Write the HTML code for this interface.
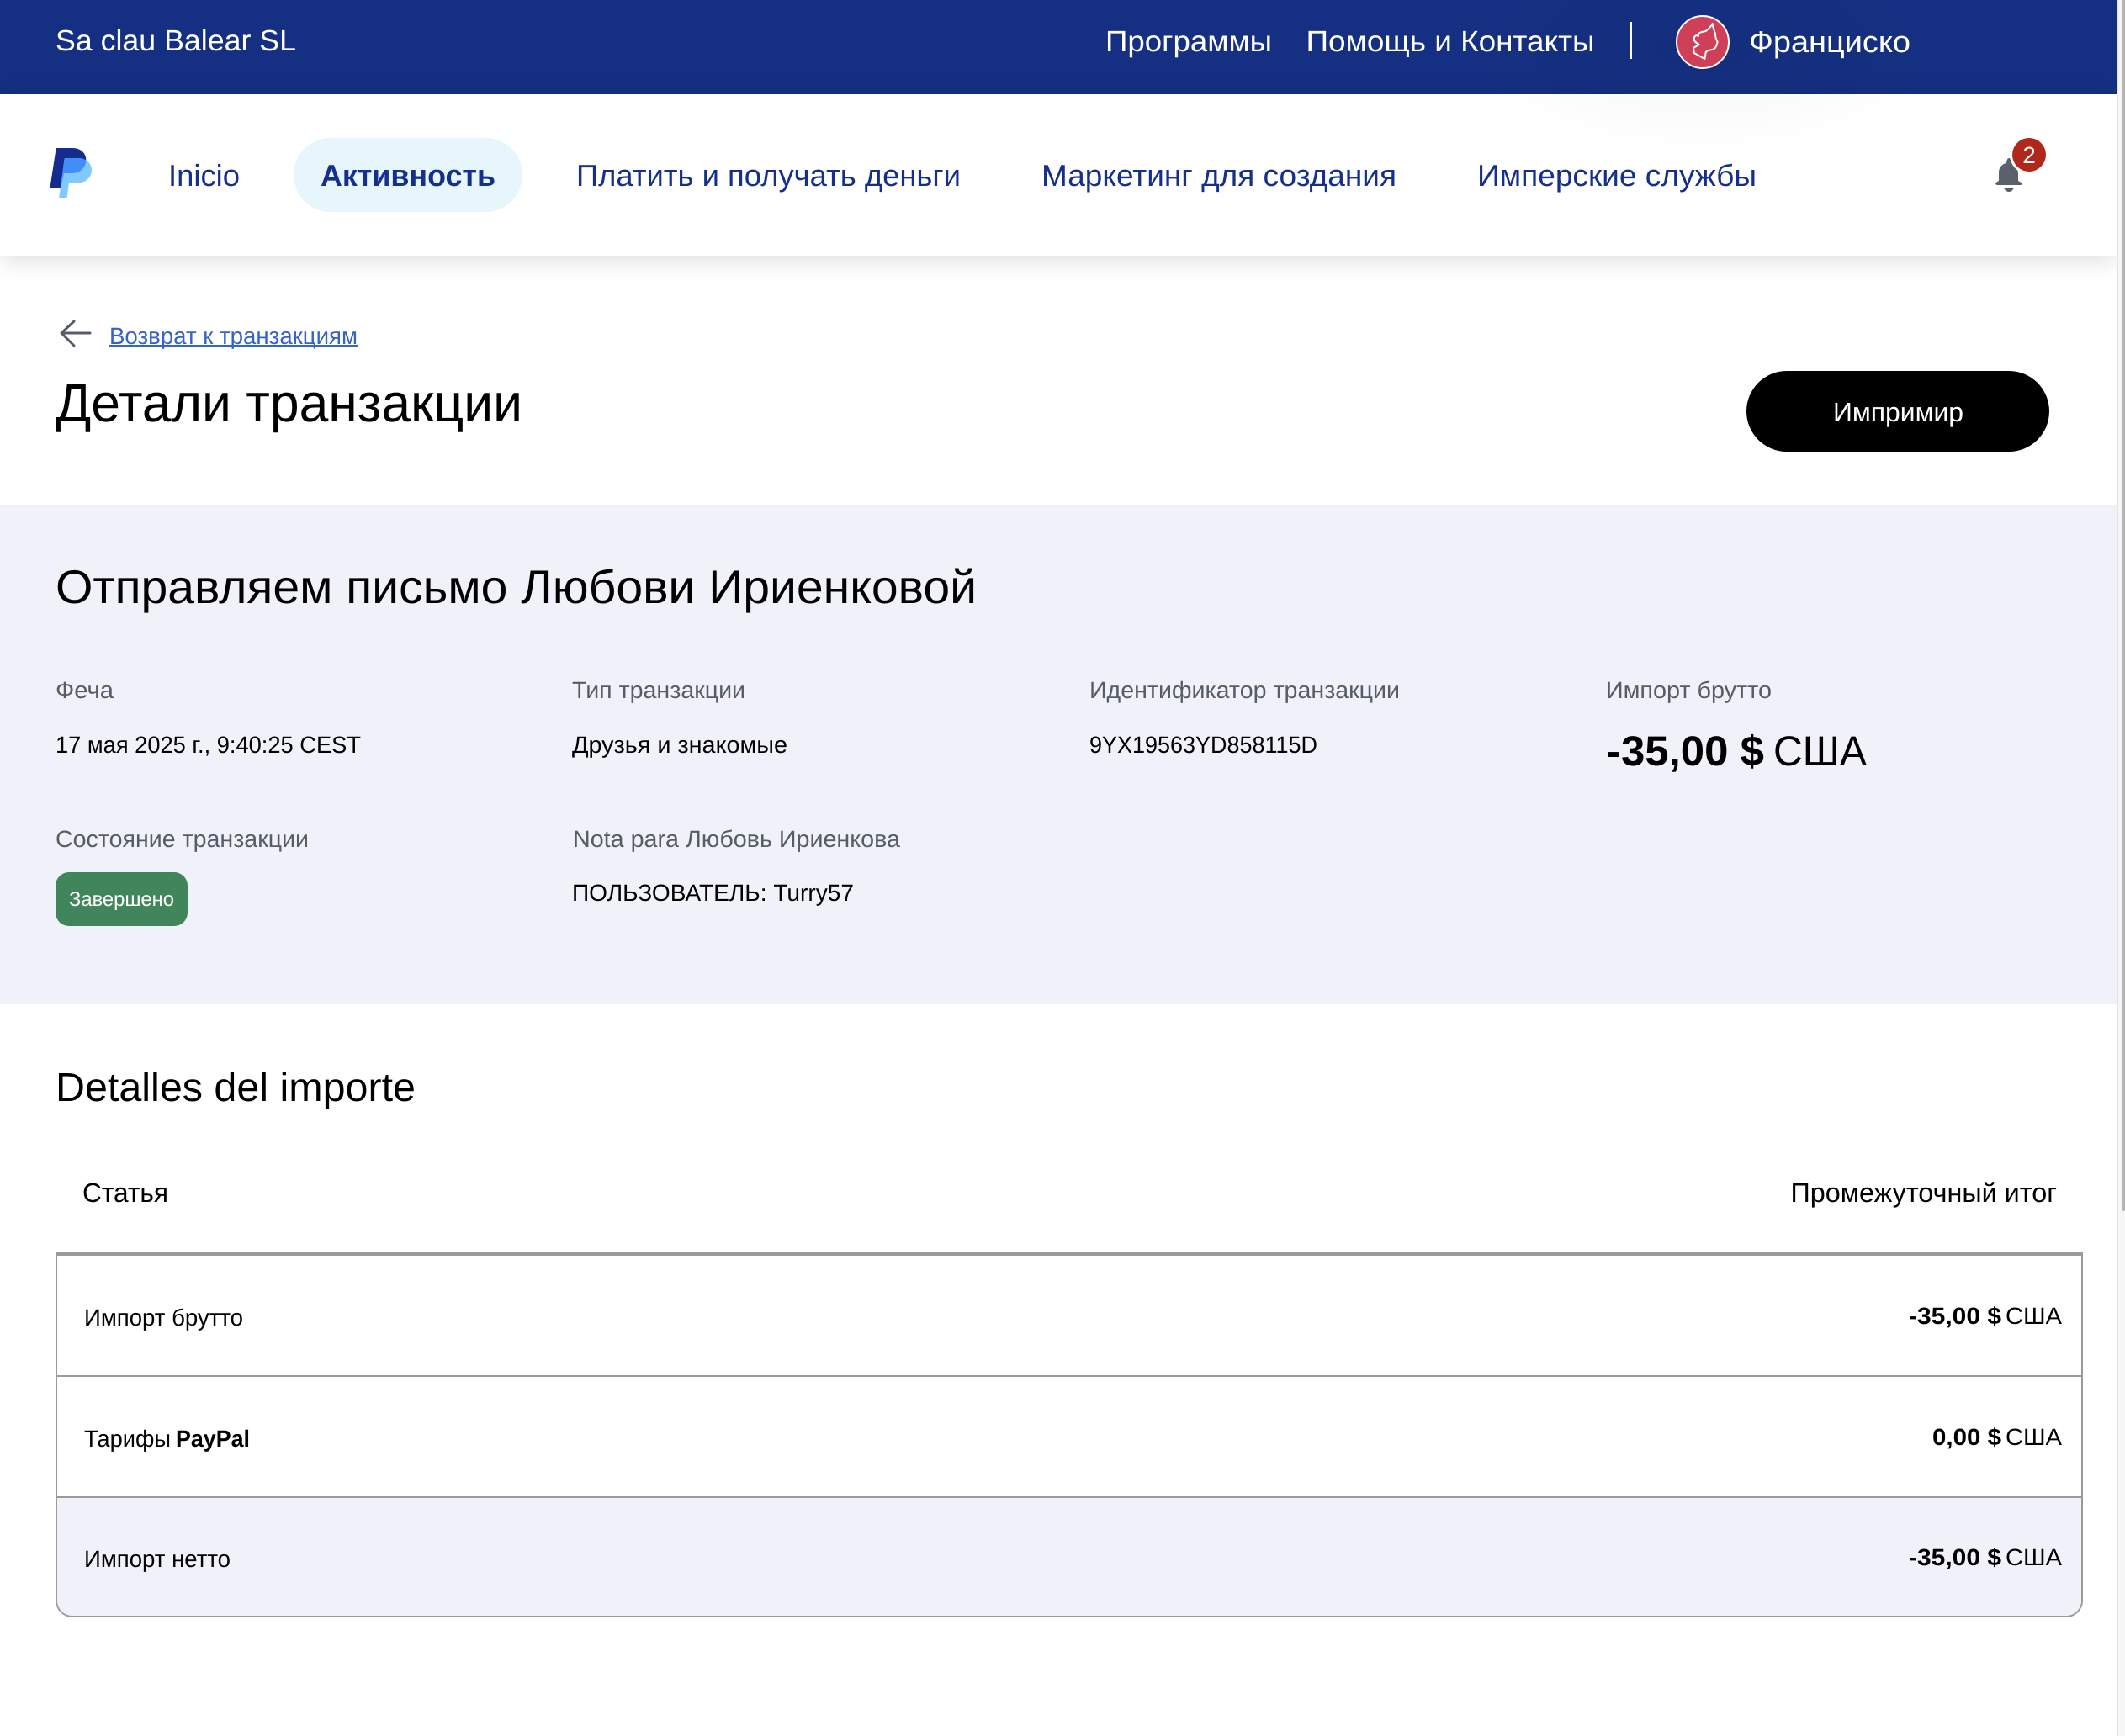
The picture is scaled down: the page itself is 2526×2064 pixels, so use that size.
<!DOCTYPE html>
<html lang="ru">
<head>
<meta charset="utf-8">
<title>Детали транзакции</title>
<style>
html,body{margin:0;padding:0;background:#fff;width:2526px;height:2064px;overflow:hidden}
body{position:relative;font-family:"Liberation Sans","Noto Sans CJK SC",sans-serif}
.b{position:absolute;display:block}
svg{position:absolute;left:0;top:0}
text{font-family:"Liberation Sans","Noto Sans CJK SC",sans-serif;text-rendering:geometricPrecision}
.nav{fill:#15308a;font-size:36px}
.top{fill:#fff;font-size:35px}
.lab{fill:#545d68;font-size:28px}
.val{fill:#000;font-size:28px}
.bold{font-weight:700}
</style>
</head>
<body>
<main>
  <div class="b" style="left:0;top:601px;width:2517px;height:593px;background:#f0f1f9"></div>
  <div class="b" style="left:0;top:0;width:2517px;height:112px;background:#153082"></div>
  <div class="b" style="left:0;top:112px;width:2517px;height:192px;background:#fff;box-shadow:0 6px 26px rgba(0,0,0,.13)"></div>
  <div class="b" style="left:1740px;top:0;width:570px;height:240px;background:radial-gradient(ellipse 285px 125px at 285px 60px,rgba(0,0,0,.04),rgba(0,0,0,0))"></div>
  <div class="b" style="left:2517px;top:0;width:9px;height:2064px;background:#f7f7f7;box-shadow:inset 1px 0 0 #e4e4e4"></div>
  <div class="b" style="left:2523px;top:0;width:3px;height:1440px;background:#b4b4b4;border-radius:0 0 2px 2px"></div>
  <div class="b" style="left:349px;top:164px;width:272px;height:88px;border-radius:44px;background:#e6f6fc"></div>
  <div class="b" style="left:1938px;top:26px;width:2px;height:44px;background:#fff"></div>
  <div class="b" style="left:2076px;top:441px;width:360px;height:96px;border-radius:48px;background:#000"></div>
  <div class="b" style="left:66px;top:1037px;width:157px;height:64px;border-radius:16px;background:#40855b"></div>
  <div class="b" style="left:66px;top:1489px;width:2410px;height:434px;box-sizing:border-box;border:2px solid #9a9a9a;border-top-width:4px;border-radius:0 0 20px 20px;background:#fff;overflow:hidden">
    <div class="b" style="left:0;top:142px;width:100%;height:2px;background:#9a9a9a"></div>
    <div class="b" style="left:0;top:286px;width:100%;height:2px;background:#9a9a9a"></div>
    <div class="b" style="left:0;top:288px;width:100%;height:142px;background:#f0f1f9"></div>
  </div>
</main>
<svg width="2526" height="2064" viewBox="0 0 2526 2064" xmlns="http://www.w3.org/2000/svg">
  <defs>
    <clipPath id="dk"><path d="M66.7 176H86C96 176 102.3 182 102.3 190C102.3 199 95 206 86 206H76L72 224H59.3Z"/></clipPath>
  </defs>
  <!-- top bar -->
  <text class="top" x="66" y="60" textLength="286" lengthAdjust="spacingAndGlyphs">Sa clau Balear SL</text>
  <text class="top" x="1314" y="61" textLength="198" lengthAdjust="spacingAndGlyphs">Программы</text>
  <text class="top" x="1552.5" y="61" textLength="343" lengthAdjust="spacingAndGlyphs">Помощь и Контакты</text>
  <circle cx="2024" cy="50" r="31" fill="#cf3f58" stroke="#fff" stroke-width="2"/>
  <path d="M2035.7 28C2035.5 32 2038.5 37 2039 41C2039.3 45 2039.7 46 2041.7 50C2040.5 53 2040.5 56 2037.7 58C2034 60 2030 59 2027.7 62L2026.5 70L2013.8 63L2013 57L2019.8 53C2017 51 2014 50 2013.8 47C2013.5 43 2016 41 2019 43C2017.5 39 2022 38 2027.7 37C2031 34 2034 32 2035.7 28Z" fill="none" stroke="#fff" stroke-width="2" stroke-linejoin="round"/>
  <text class="top" x="2079" y="62" style="font-size:36px" textLength="192" lengthAdjust="spacingAndGlyphs">Франциско</text>

  <!-- logo -->
  <path d="M66.7 176H86C96 176 102.3 182 102.3 190C102.3 199 95 206 86 206H76L72 224H59.3Z" fill="#142c8e"/>
  <path d="M76.7 188H93C102 188 109 194 109 202C109 211 102 217.3 93 217.3H82L79.5 236H70Z" fill="#80c9ff"/>
  <path d="M76.7 188H93C102 188 109 194 109 202C109 211 102 217.3 93 217.3H82L79.5 236H70Z" fill="#428ef9" clip-path="url(#dk)"/>

  <!-- nav -->
  <text class="nav" x="200" y="221" textLength="85" lengthAdjust="spacingAndGlyphs">Inicio</text>
  <text class="nav bold" x="381" y="221" textLength="208" lengthAdjust="spacingAndGlyphs">Активность</text>
  <text class="nav" x="685" y="221" textLength="457" lengthAdjust="spacingAndGlyphs">Платить и получать деньги</text>
  <text class="nav" x="1238" y="221" textLength="422" lengthAdjust="spacingAndGlyphs">Маркетинг для создания</text>
  <text class="nav" x="1756" y="221" textLength="332" lengthAdjust="spacingAndGlyphs">Имперские службы</text>

  <!-- bell -->
  <path d="M2388 188C2390 188 2391 192 2392 194C2397 196 2399 201 2399 207V214C2399 216 2402 216 2404 218C2404 220 2402 220 2401 220H2375C2373 220 2372 219 2372 218C2373 216 2376 216 2376 214V205C2376 199 2380 195 2385 194C2385 192 2386 188 2388 188Z" fill="#5b616b"/>
  <path d="M2382 223H2394C2393 226 2391 228 2388 228C2385 228 2383 226 2382 223Z" fill="#5b616b"/>
  <circle cx="2412" cy="184" r="23" fill="#fff"/>
  <circle cx="2412" cy="184" r="20" fill="#b0271c"/>
  <text x="2412" y="194" fill="#fff" font-size="28" text-anchor="middle">2</text>

  <!-- back -->
  <path d="M107 396H74M88 382L73 396L88 411" fill="none" stroke="#545d68" stroke-width="3" stroke-linecap="round" stroke-linejoin="round"/>
  <text x="130" y="409" fill="#3563c9" font-size="28" textLength="295" lengthAdjust="spacingAndGlyphs">Возврат к транзакциям</text>
  <rect x="130" y="410" width="295" height="2" fill="#3563c9"/>
  <text x="66" y="501" fill="#000" font-size="64" textLength="555" lengthAdjust="spacingAndGlyphs">Детали транзакции</text>
  <text x="2179" y="501" fill="#fff" font-size="32" textLength="155" lengthAdjust="spacingAndGlyphs">Импримир</text>

  <!-- summary -->
  <text x="66" y="717" fill="#000" font-size="56" textLength="1095" lengthAdjust="spacingAndGlyphs">Отправляем письмо Любови Ириенковой</text>
  <text class="lab" x="66" y="830" textLength="69" lengthAdjust="spacingAndGlyphs">Феча</text>
  <text class="lab" x="680" y="830" textLength="206" lengthAdjust="spacingAndGlyphs">Тип транзакции</text>
  <text class="lab" x="1295" y="830" textLength="369" lengthAdjust="spacingAndGlyphs">Идентификатор транзакции</text>
  <text class="lab" x="1909" y="830" textLength="197" lengthAdjust="spacingAndGlyphs">Импорт брутто</text>
  <text class="val" x="66" y="895" textLength="363" lengthAdjust="spacingAndGlyphs">17 мая 2025 г., 9:40:25 CEST</text>
  <text class="val" x="680" y="895" textLength="256" lengthAdjust="spacingAndGlyphs">Друзья и знакомые</text>
  <text class="val" x="1295" y="895" textLength="271" lengthAdjust="spacingAndGlyphs">9YX19563YD858115D</text>
  <text class="bold" x="1910" y="910" fill="#000" font-size="50" textLength="187" lengthAdjust="spacingAndGlyphs">-35,00 $</text>
  <text x="2108" y="910" fill="#000" font-size="50" textLength="111" lengthAdjust="spacingAndGlyphs">США</text>
  <text class="lab" x="66" y="1007" textLength="301" lengthAdjust="spacingAndGlyphs">Состояние транзакции</text>
  <text class="lab" x="681" y="1007" textLength="389" lengthAdjust="spacingAndGlyphs">Nota para Любовь Ириенкова</text>
  <text x="82" y="1077" fill="#fff" font-size="24" textLength="125" lengthAdjust="spacingAndGlyphs">Завершено</text>
  <text class="val" x="680" y="1071" textLength="335" lengthAdjust="spacingAndGlyphs">ПОЛЬЗОВАТЕЛЬ: Turry57</text>

  <!-- details -->
  <text x="66" y="1309" fill="#000" font-size="48" textLength="428" lengthAdjust="spacingAndGlyphs">Detalles del importe</text>
  <text x="98" y="1429" fill="#000" font-size="32" textLength="102" lengthAdjust="spacingAndGlyphs">Статья</text>
  <text x="2128.5" y="1429" fill="#000" font-size="32" textLength="316.5" lengthAdjust="spacingAndGlyphs">Промежуточный итог</text>

  <text class="val" x="100" y="1576" textLength="189" lengthAdjust="spacingAndGlyphs">Импорт брутто</text>
  <text class="val" x="100" y="1720" textLength="103" lengthAdjust="spacingAndGlyphs">Тарифы</text>
  <text class="val bold" x="209" y="1720" textLength="88" lengthAdjust="spacingAndGlyphs">PayPal</text>
  <text class="val" x="100" y="1863" textLength="174" lengthAdjust="spacingAndGlyphs">Импорт нетто</text>

  <text class="val bold" x="2269" y="1574" textLength="110" lengthAdjust="spacingAndGlyphs">-35,00 $</text>
  <text class="val" x="2384" y="1574" textLength="67" lengthAdjust="spacingAndGlyphs">США</text>
  <text class="val bold" x="2297" y="1718" textLength="82" lengthAdjust="spacingAndGlyphs">0,00 $</text>
  <text class="val" x="2384" y="1718" textLength="67" lengthAdjust="spacingAndGlyphs">США</text>
  <text class="val bold" x="2269" y="1861" textLength="110" lengthAdjust="spacingAndGlyphs">-35,00 $</text>
  <text class="val" x="2384" y="1861" textLength="67" lengthAdjust="spacingAndGlyphs">США</text>
</svg>
</body>
</html>
